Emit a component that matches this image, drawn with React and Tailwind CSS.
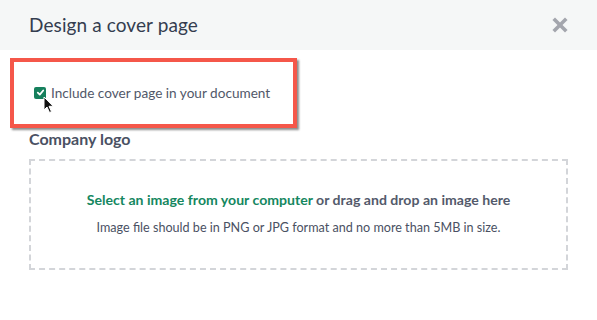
import React from 'react';

const IconClose = () => (
  <svg width="16" height="16" viewBox="0 0 16 16" fill="none" stroke="#a3a6ad" strokeWidth="3.6" strokeLinecap="square"><line x1="3" y1="3" x2="13" y2="13"/><line x1="13" y1="3" x2="3" y2="13"/></svg>
);

const Cursor = () => (
  <svg width="12" height="18" viewBox="0 0 12 18" className="absolute left-[9px] top-[12px]">
    <path d="M1 1 L1 14 L4 11 L6.5 16.5 L8.5 15.6 L6 10.3 L10.2 10.3 Z" fill="#111" stroke="#fff" strokeWidth="1" strokeLinejoin="round"/>
  </svg>
);

const App = () => {
  return (
    <div className="w-[597px] h-[320px] bg-white overflow-hidden" style={{ fontFamily: 'Lato, "Noto Sans", sans-serif' }}>
      {/* Header */}
      <div className="h-[50px] bg-[#f5f7f7] flex items-center justify-between pl-[29px] pr-[29px]">
        <h1 className="text-[19px] text-[#343d4f] tracking-[0.1px]">Design a cover page</h1>
        <IconClose />
      </div>

      {/* Highlighted option */}
      <div className="ml-[10px] mt-[8px] w-[287px] h-[70px] border-4 border-[#f5574a] shadow-[2px_2px_2px_rgba(0,0,0,0.45)] flex items-center pl-[20px] pb-[1px]">
        <div className="relative flex items-center gap-[5px]">
          <span className="w-[12px] h-[12px] rounded-[2px] bg-[#16805d] flex items-center justify-center">
            <svg width="9" height="9" viewBox="0 0 10 10" fill="none" stroke="#fff" strokeWidth="2" strokeLinecap="round" strokeLinejoin="round"><polyline points="2 5.2 4.2 7.3 8 2.8"/></svg>
          </span>
          <span className="text-[13.6px] leading-[18px] text-[#515869]">Include cover page in your document</span>
          <Cursor />
        </div>
      </div>

      <div className="px-[29px]">
        <p className="mt-[1px] text-[16px] leading-[20px] font-bold text-[#4a5163]">Company logo</p>

        {/* Drop zone */}
        <div className="mt-[10px] h-[111px] border-2 border-dashed border-[#d3d5d9] flex flex-col items-center justify-center">
          <p className="text-[14.1px] leading-[18px] font-bold text-[#535a6b] mt-[-2px]">
            <span className="text-[#15875f]">Select an image from your computer</span> or drag and drop an image here
          </p>
          <p className="mt-[11px] text-[12.6px] leading-[16px] text-[#4a5163]">Image file should be in PNG or JPG format and no more than 5MB in size.</p>
        </div>
      </div>
    </div>
  );
};

export default App;
